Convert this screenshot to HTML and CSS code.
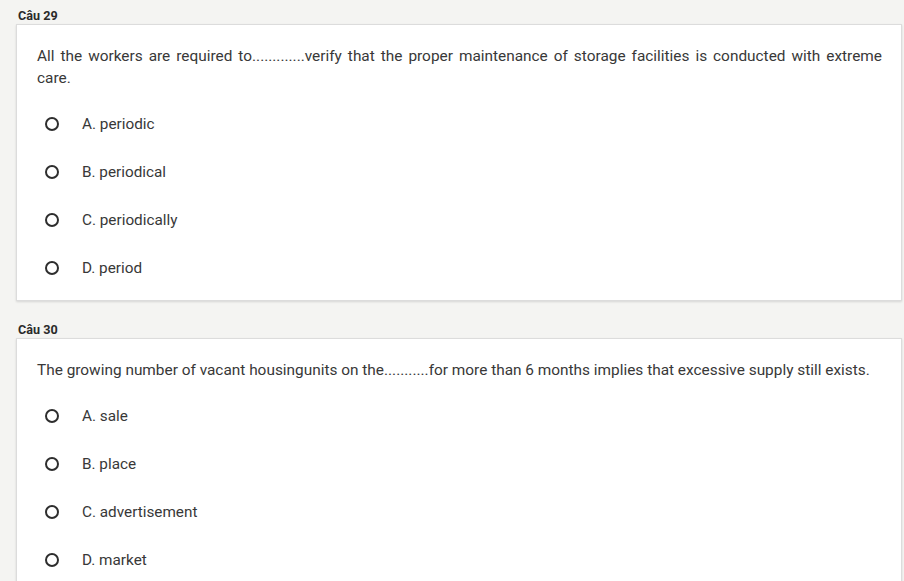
FILE: index.html
```html
<!DOCTYPE html>
<html lang="vi">
<head>
<meta charset="utf-8">
<title>Câu hỏi</title>
<link rel="stylesheet" href="styles.css">
</head>
<body>
<div class="page">
  <section class="question">
    <div class="q-label">Câu 29</div>
    <div class="card">
      <p class="q-text">All the workers are required to.............verify that the proper maintenance of storage facilities is conducted with extreme care.</p>
      <ul class="options">
        <li class="option"><span class="radio"></span><span class="opt-text">A. periodic</span></li>
        <li class="option"><span class="radio"></span><span class="opt-text">B. periodical</span></li>
        <li class="option"><span class="radio"></span><span class="opt-text">C. periodically</span></li>
        <li class="option"><span class="radio"></span><span class="opt-text">D. period</span></li>
      </ul>
    </div>
  </section>
  <section class="question">
    <div class="q-label">Câu 30</div>
    <div class="card">
      <p class="q-text">The growing number of vacant housingunits on the...........for more than 6 months implies that excessive supply still exists.</p>
      <ul class="options">
        <li class="option"><span class="radio"></span><span class="opt-text">A. sale</span></li>
        <li class="option"><span class="radio"></span><span class="opt-text">B. place</span></li>
        <li class="option"><span class="radio"></span><span class="opt-text">C. advertisement</span></li>
        <li class="option"><span class="radio"></span><span class="opt-text">D. market</span></li>
      </ul>
    </div>
  </section>
</div>
</body>
</html>
```

FILE: styles.css
```css
html, body {
  margin: 0;
  padding: 0;
  background: #f4f4f2;
}
body {
  font-family: Roboto, "Noto Sans", Arial, sans-serif;
  color: #333;
  overflow: hidden;
}
.page {
  padding: 8px 2px 0 16px;
  display: flex;
  flex-direction: column;
  gap: 21px;
}
.q-label {
  font-size: 12.6px;
  font-weight: 700;
  line-height: 16px;
  color: #2a2a2a;
  padding-left: 2px;
}
.card {
  background: #fff;
  border: 1px solid #dcdcdc;
  box-shadow: 0 1px 2px rgba(0,0,0,0.12);
  padding: 20px 19px 8px 20px;
}
.q-text {
  margin: 0;
  font-size: 15.4px;
  line-height: 22px;
  text-align: justify;
  color: #383838;
}
.options {
  list-style: none;
  margin: 11px 0 0 0;
  padding: 0;
}
.option {
  height: 48px;
  display: flex;
  align-items: center;
}
.radio {
  width: 10px;
  height: 10px;
  border: 2px solid #2e2e2e;
  border-radius: 50%;
  margin-left: 8px;
  flex: none;
}
.opt-text {
  margin-left: 23px;
  font-size: 15.3px;
  color: #383838;
}
```
